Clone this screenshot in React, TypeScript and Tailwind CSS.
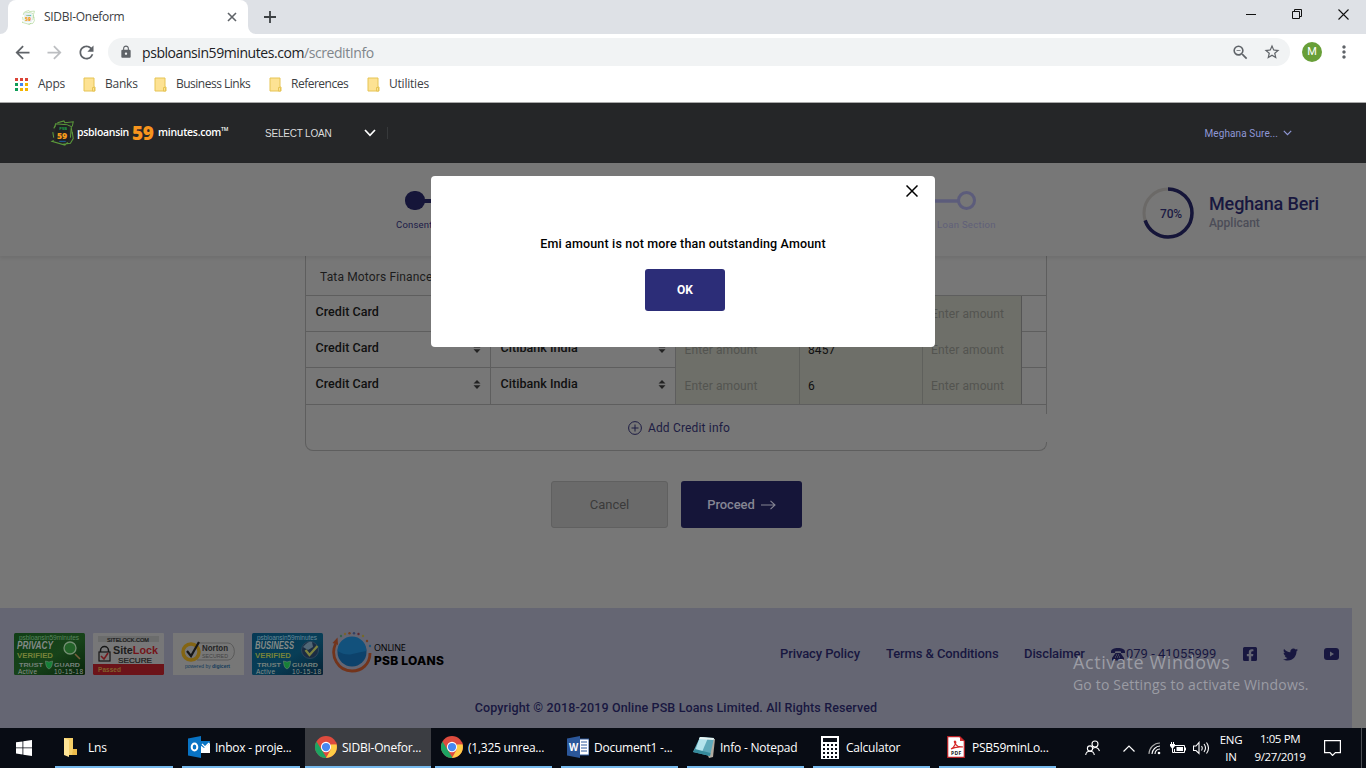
import React from "react";
import { MdArrowBack, MdArrowForward, MdRefresh, MdLock, MdStarBorder, MdMoreVert, MdZoomOut } from "react-icons/md";
import { FaFacebookSquare, FaTwitter } from "react-icons/fa";

function Favicon({ size, dark }: { size: number; dark?: boolean }) {
  return (
    <svg width={size} height={size} viewBox="0 0 26 28" className="shrink-0">
      <g fill="none" stroke={dark ? "#5c9a3b" : "#a5d08a"} strokeWidth="1.1">
        <path d="M7 3l7-2 1 2 9-1-1 5M4 8l1-4 12 1 5 2-1 12" />
        <path d="M3 9l2-3M2 13l1 6M3 22l-2 1 14 4 3-3M23 13l1 7-3 5-8 1M22 9l1 6" />
      </g>
      <rect x="5" y="6" width="14" height="17" rx="2" fill={dark ? "#1f2122" : "#e3eef2"} />
      <text x="9" y="11" fontSize="4.500" fontWeight="700" fill="#21a04c" fontFamily="Open Sans, sans-serif">PSB</text>
      <text x="6.500" y="20" fontSize="9.500" fontWeight="800" fill="#f59a1b" fontFamily="Open Sans, sans-serif">59</text>
      {dark && <path d="M9 23h7" stroke="#1c63a8" strokeWidth="1" />}
    </svg>
  );
}

function Folder() {
  return (
    <svg width="13" height="15" viewBox="0 0 13 15" className="shrink-0">
      <path d="M1 1h10v9h1v4H1z" fill="#fde293" stroke="#e6c454" strokeWidth="1" />
      <path d="M9.5 14v-3.5h2V14z" fill="#fde293" stroke="#e6c454" strokeWidth="1" />
    </svg>
  );
}

const appDots = ["#db4437", "#db4437", "#db4437", "#0f9d58", "#4285f4", "#f4b400", "#0f9d58", "#f4b400", "#f4b400"];

function Browser() {
  return (
    <div className="h-[103px] shrink-0 border-b border-[#a9a9a9] bg-white font-['Open_Sans',sans-serif] text-[#3c4043]">
      <div className="flex h-[34px] bg-[#dee1e6]">
        <svg width="8" height="34" className="shrink-0"><path d="M0 34a8 8 0 0 0 8-8v8z" fill="#fff" /></svg>
        <div className="flex w-[240px] shrink-0 items-center rounded-t-lg bg-white pl-[13px]">
          <Favicon size={15} />
          <span className="ml-2 w-[181px] whitespace-nowrap text-[12px] tracking-[-0.3px]">SIDBI-Oneform</span>
          <svg width="14" height="14" viewBox="0 0 14 14"><path d="M3 3l8 8M11 3l-8 8" stroke="#5f6368" strokeWidth="1.6" /></svg>
        </div>
        <svg width="8" height="34" className="shrink-0"><path d="M8 34a8 8 0 0 1-8-8v8z" fill="#fff" /></svg>
        <div className="flex flex-1 items-center pl-2">
          <svg width="12" height="12" viewBox="0 0 12 12"><path d="M6 0v12M0 6h12" stroke="#3c4043" strokeWidth="1.8" /></svg>
        </div>
        <div className="flex w-[138px] shrink-0 pb-[6px]">
          <div className="flex w-[46px] items-center justify-center"><svg width="10" height="10"><path d="M0 5.5h10" stroke="#111" /></svg></div>
          <div className="flex w-[46px] items-center justify-center"><svg width="10" height="10" fill="none" stroke="#111"><path d="M.5 2.500h7v7h-7zM2.500 2.500v-2h7v7h-2" /></svg></div>
          <div className="flex w-[46px] items-center justify-center"><svg width="11" height="11"><path d="M.5.5l10 10M10.500.5l-10 10" stroke="#111" strokeWidth="1.1" /></svg></div>
        </div>
      </div>
      <div className="flex h-9 items-center pl-[6px] text-[#5f6368]">
        <div className="flex w-8 justify-center"><MdArrowBack size={21} /></div>
        <div className="flex w-8 justify-center text-[#bcbec1]"><MdArrowForward size={21} /></div>
        <div className="flex w-8 justify-center"><MdRefresh size={21} /></div>
        <div className="ml-[6px] flex h-7 w-[1182px] items-center rounded-full bg-[#f1f3f4] pl-[11px]">
          <MdLock size={14} />
          <span className="ml-[9px] flex-1 whitespace-nowrap text-[14px] tracking-[-0.43px] text-[#202124]">psbloansin59minutes.com<span className="text-[#80868b]">/screditInfo</span></span>
          <MdZoomOut size={19} className="mr-[13px]" />
          <MdStarBorder size={18} className="mr-[9px]" />
        </div>
        <div className="ml-3 flex h-5 w-5 items-center justify-center rounded-full bg-[#689f38] font-['Roboto',sans-serif] text-[11px] text-white">M</div>
        <div className="flex w-11 justify-center"><MdMoreVert size={20} /></div>
      </div>
      <div className="flex h-[28px] items-center pl-[15px] text-[12px] tracking-[-0.22px]">
        <div className="grid grid-cols-3 gap-[2px]">
          {appDots.map((c, i) => <svg key={i} width="3" height="3"><rect width="3" height="3" fill={c} /></svg>)}
        </div>
        <span className="ml-[10px] w-[45px]">Apps</span>
        <Folder /><span className="ml-[9px] w-[49px]">Banks</span>
        <Folder /><span className="ml-[9px] w-[93px] whitespace-nowrap tracking-[-0.5px]">Business Links</span>
        <Folder /><span className="ml-[9px] w-[76px] tracking-[-0.5px]">References</span>
        <Folder /><span className="ml-[9px]">Utilities</span>
      </div>
    </div>
  );
}

function SiteHeader() {
  return (
    <header className="flex h-[60px] shrink-0 items-center bg-[#252628] pl-[50px] text-white">
      <Favicon size={26} dark />
      <div className="flex w-[189px] items-center whitespace-nowrap font-['Open_Sans',sans-serif] font-semibold">
        <span className="w-[56px] pl-px text-[10.500px] tracking-[-0.3px]">psbloansin</span>
        <span className="w-[26px] text-[19px] font-extrabold leading-5 tracking-[-0.3px] text-[#f7941d]">59</span>
        <span className="text-[10.500px] tracking-[-0.28px]">minutes.com</span>
        <span className="mb-2 text-[5px] leading-none">TM</span>
      </div>
      <span className="w-[99px] whitespace-nowrap font-['Liberation_Sans',sans-serif] text-[10px] tracking-[-0.2px] text-[#dcdcdc]">SELECT LOAN</span>
      <svg width="12" height="8" viewBox="0 0 12 8" fill="none"><path d="M1 1l5 5.300L11 1" stroke="#fff" strokeWidth="1.7" /></svg>
      <span className="ml-[11px] h-3 w-px bg-[#37393b]" />
      <span className="ml-auto mr-[5px] whitespace-nowrap font-['Roboto',sans-serif] text-[10px] tracking-[0.1px] text-[#8f97d6]">Meghana Sure...</span>
      <svg width="9" height="6" viewBox="0 0 9 6" fill="none" className="mr-[74px]"><path d="M.8.8l3.700 3.900L8.200.8" stroke="#8f97d6" strokeWidth="1.2" /></svg>
    </header>
  );
}

function Progress() {
  return (
    <section className="z-10 flex h-[93px] shrink-0 bg-[#777] shadow-[0_2px_4px_rgba(0,0,0,0.08)]">
      <div className="ml-[396px] w-[320px] pt-[28px] text-[#1b1a47]">
        <svg width="60" height="20" className="ml-2"><rect x="1" y="0" width="20" height="19" rx="9" fill="#151539" /><path d="M20 10h40" stroke="#151539" strokeWidth="4" /></svg>
        <p className="mt-[8px] text-[9.500px] leading-3 tracking-[0.2px]">Consent</p>
      </div>
      <div className="ml-[210px] w-[80px] pt-[28px] text-[#62618a]">
        <svg width="62" height="20" className="-ml-1"><path d="M0 10h36" stroke="#5c5c7b" strokeWidth="3.500" /><circle cx="44.500" cy="9.500" r="8" fill="none" stroke="#5c5c7b" strokeWidth="3" /></svg>
        <p className="mt-[8px] whitespace-nowrap pl-[11px] text-[9.500px] leading-3 tracking-[0.32px] text-[#606079]">Loan Section</p>
      </div>
      <div className="ml-[136px] flex pt-[23px]">
        <div className="grid h-[54px] w-[54px] place-items-center">
          <svg width="54" height="54" viewBox="0 0 54 54" className="col-start-1 row-start-1">
            <circle cx="26" cy="27" r="24" fill="none" stroke="#6b6967" strokeWidth="3" />
            <circle cx="26" cy="27" r="24" fill="none" stroke="#151539" strokeWidth="3.500" pathLength="100" strokeDasharray="70 30" transform="rotate(-90 26 27)" />
          </svg>
          <span className="col-start-1 row-start-1 ml-[4px] mt-[2px] text-[12px] font-medium tracking-[-0.2px] text-[#1c1b43]">70%</span>
        </div>
        <div className="ml-[13px] pt-[7px]">
          <p className="whitespace-nowrap text-[18px] font-medium leading-[22px] tracking-[-0.12px] text-[#18173f]">Meghana Beri</p>
          <p className="text-[12px] font-medium leading-4 text-[#4c4d57]">Applicant</p>
        </div>
      </div>
    </section>
  );
}

function Sort() {
  return <svg width="8" height="9" viewBox="0 0 8 9"><path d="M4 0l3.500 3.600h-7zM4 9L.5 5.200h7z" fill="#222" /></svg>;
}

function Row({ value, tall }: { value: string; tall?: boolean }) {
  const h = tall ? "h-[37px]" : "h-[36px]";
  return (
    <div className={`flex shrink-0 ${h} text-[12.500px]`}>
      {["Credit Card", "Citibank India"].map((t) => (
        <div key={t} className="flex w-[185px] items-center justify-between border-b border-r border-[#5e5e5e] pb-[3px] pl-[9.500px] pr-[9px] font-medium tracking-[0.05px] text-[#101010]">
          <span>{t}</span><Sort />
        </div>
      ))}
      <div className={`flex ${h} w-[346px] bg-[#6e6f69] text-[#535450] ${tall ? "border-b border-[#5e5e5e]" : ""}`}>
        <div className="flex w-[124px] items-center border-r border-[#5f605c] pl-[8.500px] text-[12px] tracking-[0.1px]">Enter amount</div>
        <div className="flex w-[123px] items-center border-r border-[#5f605c] pl-[8px] text-[12px] tracking-[0.1px] text-[#111]">{value}</div>
        <div className="flex flex-1 items-center border-r border-[#555] pl-[8px] text-[12px] tracking-[0.1px]">Enter amount</div>
      </div>
      <div className="flex-1 border-b border-[#5e5e5e]" />
    </div>
  );
}

function Form() {
  return (
    <main className="h-[352px] shrink-0 bg-[#777] pl-[305px]">
      <div className="flex h-[195px] w-[742px] flex-col rounded-b-[8px] border-x border-b border-[#5e5e5e]">
        <div className="flex h-[40px] shrink-0 items-center border-b border-[#5e5e5e] pl-[14px] pt-[3px] text-[12px] tracking-[0.15px] text-[#1c1c1c]">Tata Motors Finance</div>
        <Row value="" />
        <Row value="8457" />
        <Row value="6" tall />
        <div className="relative flex flex-1 items-center justify-center pl-[6px] text-[12px] tracking-[0.17px] text-[#1d1c43]">
          <svg width="14" height="14" viewBox="0 0 14 14" fill="none" stroke="#1d1c43" className="mr-[6px]"><circle cx="7" cy="7" r="6.400" /><path d="M7 3.500v7M3.500 7h7" /></svg>
          Add Credit info
          <span className="absolute -right-px top-[9px] h-[28px] w-px bg-[#777]" />
        </div>
      </div>
      <div className="flex pl-[246px] pt-[30px] text-[13px]">
        <div className="flex h-[47px] w-[117px] items-center justify-center rounded-[3px] border border-[#606060] bg-[#6a6a6a] text-[#3b3b3b]">Cancel</div>
        <div className="ml-[13px] flex h-[47px] w-[121px] items-center justify-center rounded-[3px] bg-[#151539] font-medium tracking-[-0.1px] text-[#858593]">
          Proceed
          <svg width="15" height="10" viewBox="0 0 15 10" fill="none" className="ml-[6px]"><path d="M0 5h14M9.500.8L14 5 9.500 9.200" stroke="#858593" strokeWidth="1.1" /></svg>
        </div>
      </div>
    </main>
  );
}

function TrustBadge({ blue }: { blue?: boolean }) {
  const id = blue ? "tb" : "tg";
  return (
    <svg width="71" height="42" viewBox="0 0 71 42" className="mr-2 shrink-0">
      <defs><linearGradient id={id} x1="0" y1="0" x2="1" y2="1"><stop offset="0" stopColor={blue ? "#063955" : "#103e15"} /><stop offset=".55" stopColor={blue ? "#083e57" : "#17431a"} /><stop offset="1" stopColor={blue ? "#062235" : "#08240b"} /></linearGradient></defs>
      <rect width="71" height="42" rx="1.500" fill={`url(#${id})`} />
      <g fontFamily="Liberation Sans, sans-serif">
        <text x="5" y="6.500" fontSize="6.500" fill={blue ? "#668a99" : "#5a865f"} textLength="60">psbloansin59minutes</text>
        <text x="3" y="16" fontSize="10.500" fontWeight="700" fontStyle="italic" fill="#838a87" textLength={blue ? 39 : 36} lengthAdjust="spacingAndGlyphs">{blue ? "BUSINESS" : "PRIVACY"}</text>
        <text x="3" y="24.500" fontSize="7.500" fontWeight="700" fill="#778339" textLength="36" lengthAdjust="spacingAndGlyphs">VERIFIED</text>
        <text x="5" y="34" fontSize="5" fontWeight="700" fill="#77827d" textLength="24" lengthAdjust="spacingAndGlyphs">TRUST</text>
        <text x="40" y="34" fontSize="5" fontWeight="700" fill="#77827d" textLength="26" lengthAdjust="spacingAndGlyphs">GUARD</text>
        <text x="4" y="40.500" fontSize="6.500" fill="#89918c" textLength="19">Active</text>
        <text x="40" y="40.500" fontSize="6.500" fill="#89918c" textLength="29">10-15-18</text>
      </g>
      <path d="M31.500 28l3.500 1 3.500-1c0 4-1 7-3.500 8-2.500-1-3.500-4-3.500-8z" fill="#168038" stroke="#7b8b7b" strokeWidth=".5" />
      {blue ? <g><circle cx="58" cy="17" r="8.500" fill="#1b2c42" stroke="#2b465c" /><path d="M51 14q5-6 9-5l1 5-5 3z" fill="#516776" /><path d="M53.500 17l4 5 8-9" fill="none" stroke="#7b8240" strokeWidth="2.300" /></g>
        : <g><circle cx="56" cy="15" r="6" fill="#236329" stroke="#748f73" strokeWidth="1.300" /><path d="M61 21l5 5" stroke="#765f3b" strokeWidth="1.600" /></g>}
    </svg>
  );
}

function Badges() {
  return (
    <div className="flex items-center">
      <TrustBadge />
      <svg width="71" height="42" viewBox="0 0 71 42" className="mr-[9px] shrink-0" fontFamily="Liberation Sans, sans-serif">
        <rect width="71" height="42" rx="1" fill="#777778" /><path d="M0 31h71v9.500a1.500 1.500 0 0 1-1.500 1.500h-68A1.500 1.500 0 0 1 0 40.500z" fill="#6c1319" /><path d="M5 3h61v6H5z" fill="#6b6c6c" />
        <text x="14" y="8.500" fontSize="6" fill="#171717" stroke="#171717" strokeWidth=".2" textLength="42" lengthAdjust="spacingAndGlyphs">SITELOCK.COM</text>
        <text x="20" y="20.500" fontSize="10" fontWeight="700" fill="#1c1c1c" textLength="45" lengthAdjust="spacingAndGlyphs">Site<tspan fill="#741419">Lock</tspan></text>
        <text x="25" y="29.500" fontSize="8" fill="#171717" stroke="#171717" strokeWidth=".2" textLength="34" lengthAdjust="spacingAndGlyphs">SECURE</text>
        <text x="5" y="39" fontSize="6.500" fontWeight="700" fill="#81622c" textLength="23">Passed</text>
        <path d="M7.500 19v-1.500a4 4 0 0 1 8 0V19" fill="none" stroke="#161616" strokeWidth="1.500" /><rect x="6" y="19" width="11" height="9" fill="#777" stroke="#161616" strokeWidth="1.200" /><path d="M8 23l3 3 4-6" fill="none" stroke="#74191d" strokeWidth="1.600" />
      </svg>
      <svg width="71" height="42" viewBox="0 0 71 42" className="mr-2 shrink-0" fontFamily="Liberation Sans, sans-serif">
        <rect width="71" height="42" fill="#777" /><path d="M24 10h31a6 8 0 0 1 0 17H24" fill="none" stroke="#4e4e4e" strokeWidth=".7" />
        <circle cx="18" cy="19" r="8" fill="#777" stroke="#846513" strokeWidth="3.500" /><path d="M14 18l4 5 8-14" fill="none" stroke="#171717" strokeWidth="2.200" />
        <text x="29" y="18" fontSize="8.500" fontWeight="700" fill="#242424" textLength="26" lengthAdjust="spacingAndGlyphs">Norton</text>
        <text x="29" y="25" fontSize="5.500" fill="#444" textLength="26" lengthAdjust="spacingAndGlyphs">SECURED</text>
        <text x="12" y="35" fontSize="5.500" fill="#123a5a" textLength="45" lengthAdjust="spacingAndGlyphs">powered by <tspan fontWeight="700">digicert</tspan></text>
      </svg>
      <TrustBadge blue />
      <svg width="43" height="44" viewBox="0 0 43 44" className="shrink-0">
        <path d="M4.500 12C-1 24 7 39 21 39c10 0 18-7 18-18" fill="none" stroke="#73341b" strokeWidth="2.800" /><path d="M1.500 11l5-5.500L7 13z" fill="#73341b" />
        <circle cx="21" cy="20" r="14.500" fill="#0d426b" /><path d="M6.500 19q8 5 15 3 8-2 14-3a14.500 14.500 0 0 0-29 0z" fill="#12517c" />
        {[["10", "4", "#38624b"], ["14", "2", "#7a642d"], ["18.500", "1.200", "#713e20"], ["23", "1.200", "#314064"], ["27.500", "2", "#5e292f"], ["32", "4", "#756a2a"], ["36", "9", "#713e20"], ["39", "14", "#215779"]].map(([x, y, c]) => <circle key={x} cx={x} cy={y} r="1.200" fill={c} />)}
      </svg>
      <div className="whitespace-nowrap font-['Open_Sans',sans-serif] text-black">
        <p className="text-[9px] leading-[12px] tracking-[-0.2px]">ONLINE</p>
        <p className="font-['Inter',sans-serif] text-[12px] font-extrabold leading-[13px] tracking-[0.25px]">PSB LOANS</p>
      </div>
    </div>
  );
}

function Footer() {
  return (
    <div className="flex h-[120px] shrink-0 bg-[#777]">
      <footer className="h-full w-[1352px] bg-[#656673] text-[13px] text-[#181740]">
        <div className="flex h-[92px] items-center pl-[14px]">
          <Badges />
          <div className="ml-auto flex items-center whitespace-nowrap font-medium tracking-[-0.1px]">
            <span className="w-[106px]">Privacy Policy</span>
            <span className="w-[138px]">Terms &amp; Conditions</span>
            <span className="w-[86px]">Disclaimer</span>
            <svg width="16" height="14" viewBox="0 0 16 14" fill="#181740"><path d="M1 5C1 2 4 1 8 1s7 1 7 4v1h-4V4.500C9 4 7 4 5 4.500V6H1z" /><path d="M5.500 6h5l3.500 5v2.500H2V11z" /><path d="M6 8h4M5 10h6" stroke="#656673" strokeDasharray="1 1" /></svg>
            <span className="w-[106px] font-normal tracking-normal">079 - 41055999</span>
            <FaFacebookSquare size={16} className="ml-[10px] mr-[9px]" />
            <FaTwitter size={15} className="mx-[16px]" />
            <svg width="15" height="12" viewBox="0 0 15 12" className="ml-[10px] mr-[13px]"><rect width="15" height="12" rx="3" fill="#181740" /><path d="M6 3.500v5L10 6z" fill="#656673" /></svg>
          </div>
        </div>
        <p className="text-center text-[12.500px] font-medium leading-4 tracking-[0.13px]">Copyright © 2018-2019 Online PSB Loans Limited. All Rights Reserved</p>
      </footer>
    </div>
  );
}

function ChromeIcon() {
  return (
    <svg width="22" height="22" viewBox="0 0 24 24">
      <circle cx="12" cy="12" r="12" fill="#dd4b3e" />
      <path d="M1.600 6L7.200 15l5.500 9A12 12 0 0 1 1.600 6z" fill="#1da462" />
      <path d="M12 24l5-9 .5-6h6A12 12 0 0 1 12 24z" fill="#ffcd46" />
      <path d="M12 6.500h11l.5 2.500H12z" fill="#dd4b3e" />
      <circle cx="12" cy="12" r="5.600" fill="#fff" /><circle cx="12" cy="12" r="4.500" fill="#4688f1" />
    </svg>
  );
}

const folderIcon = <svg width="22" height="22" viewBox="0 0 22 22"><path d="M4 2h9v17H4z" fill="#f6cf68" /><path d="M4 2l5 2v17l-5-2z" fill="#ffe596" /><path d="M13 13h4v6h-5z" fill="#eebc4b" /></svg>;
const outlookIcon = <svg width="22" height="22" viewBox="0 0 22 22"><path d="M12 5h10v12H12z" fill="#fff" /><path d="M12 5h10v2l-6 5-4-3z" fill="#0873c4" /><path d="M14 8l3 3 4-4" fill="none" stroke="#fff" strokeWidth="1.200" /><path d="M0 2.500L13 0v22L0 19.500z" fill="#0873c4" /><ellipse cx="6.500" cy="11" rx="2.800" ry="3.500" fill="none" stroke="#fff" strokeWidth="2" /></svg>;
const wordIcon = <svg width="22" height="22" viewBox="0 0 22 22"><path d="M12 3h10v16H12z" fill="#fff" stroke="#2b579a" /><path d="M14 6h6M14 9h6M14 12h6M14 15h6" stroke="#2b579a" /><path d="M0 2.500L13 0v22L0 19.500z" fill="#2b579a" /><text x="2" y="15" fontSize="10" fontWeight="700" fill="#fff" fontFamily="Open Sans, sans-serif" textLength="9" lengthAdjust="spacingAndGlyphs">W</text></svg>;
const notepadIcon = <svg width="24" height="22" viewBox="0 0 24 22"><path d="M8 2l15 1-2 18-4 1z" fill="#b2aca1" /><path d="M8 1l14 1-4 18L1 16z" fill="#5fa9ba" /><path d="M8 1l8 1-6 14-7-1z" fill="#b4e3ec" /><path d="M8 1l14 1-.5 2L7 3z" fill="#e8f4f2" /><path d="M1 16l17 4 .5-3L3 13z" fill="#368b9c" /></svg>;
const calcIcon = <svg width="18" height="23" viewBox="0 0 18 23"><path d="M0 0h18v23H0z" fill="#fff" /><path d="M2 2h14v4H2z" fill="#080c14" />{[8, 12, 16, 20].map((y) => [2, 6, 10, 14].map((x) => <path key={`${x}-${y}`} d={`M${x} ${y}h2v2h-2z`} fill="#080c14" />))}</svg>;
const pdfIcon = <svg width="18" height="22" viewBox="0 0 18 22"><path d="M.7.700h12L17.300 5v16.300H.7z" fill="#fff" stroke="#b71f24" strokeWidth="1.200" /><path d="M13 1v4h4" fill="#d63434" /><path d="M4 13c4-2 6-8 4-8s1 6 6 6-5-1-10 2z" fill="none" stroke="#d62828" strokeWidth="1.200" /><text x="4" y="19" fontSize="5" fontWeight="700" fill="#181818" fontFamily="Open Sans, sans-serif" textLength="10">PDF</text></svg>;

const tasks: { icon: React.ReactNode; label: string; box: string; gap: string }[] = [
  { icon: folderIcon, label: "Lns", box: "ml-[7px] w-[118px] pl-[5px]", gap: "ml-[6px]" },
  { icon: outlookIcon, label: "Inbox - proje...", box: "ml-[9px] w-[118px] pl-[6px]", gap: "ml-[5px]" },
  { icon: <ChromeIcon />, label: "SIDBI-Onefor...", box: "ml-[5px] w-[126px] bg-[#3b3d42] pl-[10px]", gap: "ml-[5px]" },
  { icon: <ChromeIcon />, label: "(1,325 unrea...", box: "ml-[4px] w-[117px] pl-[6px]", gap: "ml-[5px]" },
  { icon: wordIcon, label: "Document1 -...", box: "ml-[9px] w-[117px] pl-[6px]", gap: "ml-[5px]" },
  { icon: notepadIcon, label: "Info - Notepad", box: "ml-[9px] w-[117px] pl-[5px]", gap: "ml-[4px]" },
  { icon: calcIcon, label: "Calculator", box: "ml-[9px] w-[117px] pl-[8px]", gap: "ml-[7px]" },
  { icon: pdfIcon, label: "PSB59minLo...", box: "ml-[9px] w-[117px] pl-[8px]", gap: "ml-[7px]" },
];

function Taskbar() {
  return (
    <div className="flex h-10 shrink-0 items-stretch bg-[#080c14] font-['Open_Sans',sans-serif] text-[12px] text-white">
      <div className="flex w-12 shrink-0 items-center justify-center"><svg width="16" height="16" viewBox="0 0 16 16" fill="#fff"><path d="M0 2.300L6.500 1.400v6.100H0zM7.300 1.300L16 0v7.500H7.300zM0 8.300h6.500v6.200L0 13.600zM7.300 8.300H16V16l-8.700-1.300z" /></svg></div>
      {tasks.map((t) => (
        <div key={t.label} className={`flex shrink-0 items-center whitespace-nowrap border-b-2 border-[#76b9ed] tracking-[-0.24px] ${t.box}`}>
          {t.icon}<span className={`pt-[2px] ${t.gap}`}>{t.label}</span>
        </div>
      ))}
      <div className="ml-[29px] flex items-center">
        <svg width="15" height="16" viewBox="0 0 15 16" fill="none" stroke="#fff" strokeWidth="1.100"><circle cx="10" cy="4" r="3" /><path d="M7.500 8.500c3-2 6-1 7 2.500" /><circle cx="5" cy="8.500" r="2.600" /><path d="M.7 15c.5-5 8-5 8.600 0" /></svg>
        <svg width="12" height="7" viewBox="0 0 12 7" fill="none" stroke="#fff" strokeWidth="1.200" className="ml-[23px]"><path d="M.5 6.500L6 1l5.500 5.500" /></svg>
        <svg width="13" height="13" viewBox="0 0 13 13" fill="none" stroke="#fff" strokeWidth="1.100" className="ml-[13px]"><path d="M1 12C1 6 6 1 12 1" stroke="#aaa" /><path d="M4 12c0-4 4-8 8-8M7 12c0-3 2-5 5-5" /><circle cx="11" cy="11" r="1.300" fill="#fff" stroke="none" /></svg>
        <svg width="16" height="13" viewBox="0 0 16 13" fill="none" stroke="#fff" className="ml-[9px]"><path d="M5 3.500h9.500v7H4.500V7M15.500 5.500v3" /><path d="M0 2h5v2L3 6.500H2L0 4zM6.500 5H13v4H6.500z" fill="#fff" stroke="none" /><path d="M1.500 0v2M3.500 0v2M2.500 6v4.500h2" /></svg>
        <svg width="17" height="14" viewBox="0 0 17 14" fill="none" stroke="#fff" strokeWidth="1.100" className="ml-[7px]"><path d="M.5 5h2.500l3-3.500v11L3 9.500H.5zM8.500 5q1.500 2 0 4.500M11 3q3 4 0 8M13.500 1.500q4 5.500 0 11" /></svg>
      </div>
      <div className="ml-[9px] flex w-[24px] flex-col items-center pt-[3px] text-[11.500px] leading-[17px] tracking-[-0.3px]"><span>ENG</span><span>IN</span></div>
      <div className="ml-[7px] flex w-[60px] flex-col items-center whitespace-nowrap pt-[2px] text-[11.500px] leading-[18px] tracking-[-0.4px]"><span>1:05 PM</span><span>9/27/2019</span></div>
      <div className="ml-[14px] flex items-center"><svg width="17" height="16" viewBox="0 0 17 16" fill="none" stroke="#fff" strokeWidth="1.200"><path d="M.6.600h15.800v12h-5L8.500 15.500 6 12.600H.6z" /></svg></div>
      <div className="ml-auto mr-1 w-px bg-[#4b4e54]" />
    </div>
  );
}

export default function App() {
  return (
    <div className="relative flex h-[768px] w-[1366px] flex-col overflow-hidden bg-[#777] font-['Roboto',sans-serif] leading-normal">
      <Browser />
      <SiteHeader />
      <Progress />
      <Form />
      <Footer />
      <Taskbar />
      <div role="dialog" className="absolute left-[431px] top-[176px] z-20 flex h-[171px] w-[504px] flex-col items-center rounded-[4px] bg-white">
        <svg width="12" height="12" viewBox="0 0 12 12" className="mr-[17px] mt-[9px] shrink-0 self-end"><path d="M.5.5l11 11M11.500.5l-11 11" stroke="#000" strokeWidth="1.500" /></svg>
        <p className="mt-[38px] whitespace-nowrap text-[12.500px] font-medium leading-[18px] tracking-[0.16px] text-black">Emi amount is not more than outstanding Amount</p>
        <button className="ml-1 mt-4 h-[42px] w-20 rounded-[3px] bg-[#2c2d78] text-[12px] font-bold text-white">OK</button>
      </div>
      <div className="absolute left-[1073px] top-[650px] z-20 whitespace-nowrap font-['Open_Sans',sans-serif] text-[#9b9ca4]">
        <p className="text-[18px] leading-[24px] tracking-[0.6px]">Activate Windows</p>
        <p className="text-[14px] leading-[21px] tracking-[0.18px]">Go to Settings to activate Windows.</p>
      </div>
    </div>
  );
}
